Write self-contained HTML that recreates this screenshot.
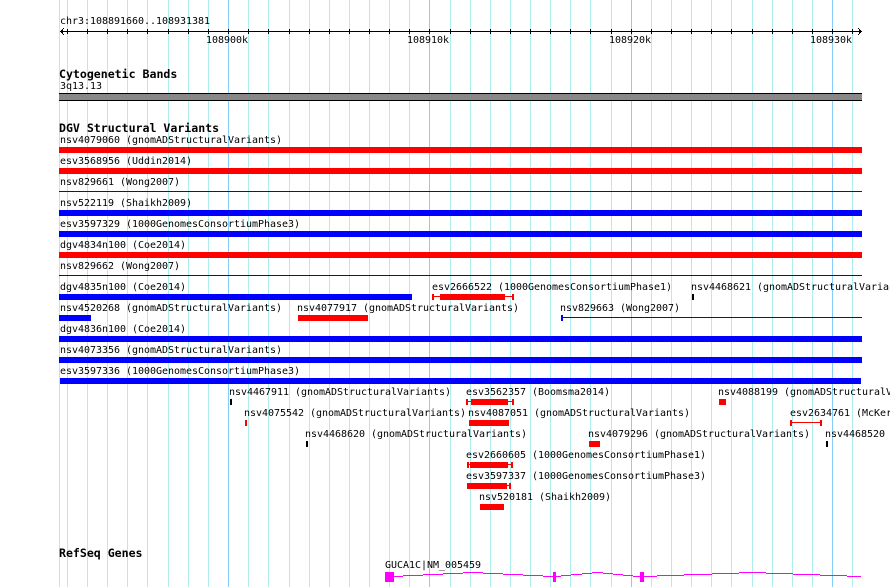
<!DOCTYPE html>
<html>
<head>
<meta charset="utf-8">
<title>Genome browser</title>
<style>
html,body{margin:0;padding:0;background:#fff;width:890px;height:587px;overflow:hidden}
svg{display:block}
text{font-family:"DejaVu Sans Mono","Liberation Mono",monospace;font-size:10px;letter-spacing:-0.02px;fill:#000}
text.b{font-size:11.6px;font-weight:bold}
.g{fill:#aeeeee}
.d{fill:#87cefa}
.r{fill:#f00}
.u{fill:#00f}
.k{fill:#000}
.m{fill:#f0f}
</style>
</head>
<body>
<svg width="890" height="587" viewBox="0 0 890 587" shape-rendering="crispEdges">
<!-- grid -->
<g class="g">
<rect x="59" y="0" width="1" height="587"/><rect x="67" y="0" width="1" height="587"/><rect x="87" y="0" width="1" height="587"/><rect x="107" y="0" width="1" height="587"/><rect x="127" y="0" width="1" height="587"/><rect x="147" y="0" width="1" height="587"/><rect x="168" y="0" width="1" height="587"/><rect x="188" y="0" width="1" height="587"/><rect x="208" y="0" width="1" height="587"/>
<rect x="248" y="0" width="1" height="587"/><rect x="268" y="0" width="1" height="587"/><rect x="289" y="0" width="1" height="587"/><rect x="309" y="0" width="1" height="587"/><rect x="329" y="0" width="1" height="587"/><rect x="349" y="0" width="1" height="587"/><rect x="369" y="0" width="1" height="587"/><rect x="389" y="0" width="1" height="587"/><rect x="409" y="0" width="1" height="587"/>
<rect x="450" y="0" width="1" height="587"/><rect x="470" y="0" width="1" height="587"/><rect x="490" y="0" width="1" height="587"/><rect x="510" y="0" width="1" height="587"/><rect x="530" y="0" width="1" height="587"/><rect x="550" y="0" width="1" height="587"/><rect x="570" y="0" width="1" height="587"/><rect x="590" y="0" width="1" height="587"/><rect x="611" y="0" width="1" height="587"/>
<rect x="651" y="0" width="1" height="587"/><rect x="671" y="0" width="1" height="587"/><rect x="691" y="0" width="1" height="587"/><rect x="711" y="0" width="1" height="587"/><rect x="731" y="0" width="1" height="587"/><rect x="752" y="0" width="1" height="587"/><rect x="772" y="0" width="1" height="587"/><rect x="792" y="0" width="1" height="587"/><rect x="812" y="0" width="1" height="587"/><rect x="852" y="0" width="1" height="587"/>
</g>
<g class="d">
<rect x="228" y="0" width="1" height="587"/><rect x="429" y="0" width="1" height="587"/><rect x="631" y="0" width="1" height="587"/><rect x="832" y="0" width="1" height="587"/>
</g>

<!-- ruler -->
<text x="60" y="24">chr3:108891660..108931381</text>
<g class="k">
<rect x="60" y="31" width="802" height="1"/>
<rect x="61" y="30" width="1" height="3"/><rect x="62" y="29" width="1" height="5"/><rect x="63" y="28" width="1" height="1"/><rect x="63" y="34" width="1" height="1"/>
<rect x="860" y="30" width="1" height="3"/><rect x="859" y="29" width="1" height="5"/><rect x="858" y="28" width="1" height="1"/><rect x="858" y="34" width="1" height="1"/>
<rect x="67" y="29" width="1" height="5"/><rect x="87" y="29" width="1" height="5"/><rect x="107" y="29" width="1" height="5"/><rect x="127" y="29" width="1" height="5"/><rect x="147" y="29" width="1" height="5"/><rect x="168" y="29" width="1" height="5"/><rect x="188" y="29" width="1" height="5"/><rect x="208" y="29" width="1" height="5"/><rect x="228" y="29" width="1" height="5"/><rect x="248" y="29" width="1" height="5"/><rect x="268" y="29" width="1" height="5"/><rect x="289" y="29" width="1" height="5"/><rect x="309" y="29" width="1" height="5"/><rect x="329" y="29" width="1" height="5"/><rect x="349" y="29" width="1" height="5"/><rect x="369" y="29" width="1" height="5"/><rect x="389" y="29" width="1" height="5"/><rect x="409" y="29" width="1" height="5"/><rect x="429" y="29" width="1" height="5"/><rect x="450" y="29" width="1" height="5"/><rect x="470" y="29" width="1" height="5"/><rect x="490" y="29" width="1" height="5"/><rect x="510" y="29" width="1" height="5"/><rect x="530" y="29" width="1" height="5"/><rect x="550" y="29" width="1" height="5"/><rect x="570" y="29" width="1" height="5"/><rect x="590" y="29" width="1" height="5"/><rect x="611" y="29" width="1" height="5"/><rect x="631" y="29" width="1" height="5"/><rect x="651" y="29" width="1" height="5"/><rect x="671" y="29" width="1" height="5"/><rect x="691" y="29" width="1" height="5"/><rect x="711" y="29" width="1" height="5"/><rect x="731" y="29" width="1" height="5"/><rect x="752" y="29" width="1" height="5"/><rect x="772" y="29" width="1" height="5"/><rect x="792" y="29" width="1" height="5"/><rect x="812" y="29" width="1" height="5"/><rect x="832" y="29" width="1" height="5"/><rect x="852" y="29" width="1" height="5"/>
</g>
<text x="206" y="43">108900k</text>
<text x="407" y="43">108910k</text>
<text x="609" y="43">108920k</text>
<text x="810" y="43">108930k</text>

<!-- cytogenetic -->
<text class="b" x="59" y="78">Cytogenetic Bands</text>
<text x="60" y="89">3q13.13</text>
<rect class="k" x="59" y="93" width="803" height="8"/>
<rect x="59" y="94" width="803" height="6" fill="#888888"/>

<!-- DGV -->
<text class="b" x="59" y="132">DGV Structural Variants</text>
<text x="60" y="143">nsv4079060 (gnomADStructuralVariants)</text>
<rect class="r" x="59" y="147" width="803" height="6"/>
<text x="60" y="164">esv3568956 (Uddin2014)</text>
<rect class="r" x="59" y="168" width="803" height="6"/>
<text x="60" y="185">nsv829661 (Wong2007)</text>
<rect class="u" x="59" y="191" width="803" height="1"/>
<text x="60" y="206">nsv522119 (Shaikh2009)</text>
<rect class="u" x="59" y="210" width="803" height="6"/>
<text x="60" y="227">esv3597329 (1000GenomesConsortiumPhase3)</text>
<rect class="u" x="59" y="231" width="803" height="6"/>
<text x="60" y="248">dgv4834n100 (Coe2014)</text>
<rect class="r" x="59" y="252" width="803" height="6"/>
<text x="60" y="269">nsv829662 (Wong2007)</text>
<rect class="u" x="59" y="275" width="803" height="1"/>

<text x="60" y="290">dgv4835n100 (Coe2014)</text>
<rect class="u" x="59" y="294" width="353" height="6"/>
<text x="432" y="290">esv2666522 (1000GenomesConsortiumPhase1)</text>
<rect class="r" x="432" y="294" width="2" height="6"/>
<rect class="r" x="434" y="296" width="78" height="1"/>
<rect class="r" x="440" y="294" width="65" height="6"/>
<rect class="r" x="512" y="294" width="2" height="6"/>
<text x="691" y="290">nsv4468621 (gnomADStructuralVariants)</text>
<rect class="k" x="692" y="294" width="2" height="6"/>

<text x="60" y="311">nsv4520268 (gnomADStructuralVariants)</text>
<rect class="u" x="59" y="315" width="32" height="6"/>
<text x="297" y="311">nsv4077917 (gnomADStructuralVariants)</text>
<rect class="r" x="298" y="315" width="70" height="6"/>
<text x="560" y="311">nsv829663 (Wong2007)</text>
<rect class="u" x="561" y="315" width="2" height="6"/>
<rect class="u" x="563" y="317" width="299" height="1"/>

<text x="60" y="332">dgv4836n100 (Coe2014)</text>
<rect class="u" x="59" y="336" width="803" height="6"/>
<text x="60" y="353">nsv4073356 (gnomADStructuralVariants)</text>
<rect class="u" x="59" y="357" width="803" height="6"/>
<text x="60" y="374">esv3597336 (1000GenomesConsortiumPhase3)</text>
<rect class="u" x="60" y="378" width="801" height="6"/>

<text x="229" y="395">nsv4467911 (gnomADStructuralVariants)</text>
<rect class="k" x="230" y="399" width="2" height="6"/>
<text x="466" y="395">esv3562357 (Boomsma2014)</text>
<rect class="r" x="466" y="399" width="2" height="6"/>
<rect class="r" x="468" y="401" width="44" height="1"/>
<rect class="r" x="471" y="399" width="37" height="6"/>
<rect class="r" x="512" y="399" width="2" height="6"/>
<text x="718" y="395">nsv4088199 (gnomADStructuralVariants)</text>
<rect class="r" x="719" y="399" width="7" height="6"/>

<text x="244" y="416">nsv4075542 (gnomADStructuralVariants)</text>
<rect class="r" x="245" y="420" width="2" height="6"/>
<text x="468" y="416">nsv4087051 (gnomADStructuralVariants)</text>
<rect class="r" x="469" y="420" width="40" height="6"/>
<text x="790" y="416">esv2634761 (McKernan2010)</text>
<rect class="r" x="790" y="420" width="2" height="6"/>
<rect class="r" x="792" y="422" width="28" height="1"/>
<rect class="r" x="820" y="420" width="2" height="6"/>

<text x="305" y="437">nsv4468620 (gnomADStructuralVariants)</text>
<rect class="k" x="306" y="441" width="2" height="6"/>
<text x="588" y="437">nsv4079296 (gnomADStructuralVariants)</text>
<rect class="r" x="589" y="441" width="11" height="6"/>
<text x="825" y="437">nsv4468520</text>
<rect class="k" x="826" y="441" width="2" height="6"/>

<text x="466" y="458">esv2660605 (1000GenomesConsortiumPhase1)</text>
<rect class="r" x="467" y="462" width="2" height="6"/>
<rect class="r" x="469" y="464" width="2" height="1"/>
<rect class="r" x="470" y="462" width="38" height="6"/>
<rect class="r" x="508" y="464" width="3" height="1"/>
<rect class="r" x="511" y="462" width="2" height="6"/>
<text x="466" y="479">esv3597337 (1000GenomesConsortiumPhase3)</text>
<rect class="r" x="467" y="483" width="40" height="6"/>
<rect class="r" x="507" y="485" width="2" height="1"/>
<rect class="r" x="509" y="483" width="2" height="6"/>
<text x="479" y="500">nsv520181 (Shaikh2009)</text>
<rect class="r" x="480" y="504" width="24" height="6"/>

<!-- RefSeq -->
<text class="b" x="59" y="557">RefSeq Genes</text>
<text x="385" y="568">GUCA1C|NM_005459</text>
<g class="m">
<rect x="385" y="572" width="9" height="10"/>
<rect x="553" y="572" width="3" height="10"/>
<rect x="640" y="572" width="4" height="10"/>
<rect x="394" y="576" width="9" height="1"/>
<rect x="403" y="575" width="20" height="1"/>
<rect x="423" y="574" width="20" height="1"/>
<rect x="443" y="573" width="20" height="1"/>
<rect x="463" y="572" width="20" height="1"/>
<rect x="483" y="573" width="20" height="1"/>
<rect x="503" y="574" width="20" height="1"/>
<rect x="523" y="575" width="20" height="1"/>
<rect x="543" y="576" width="10" height="1"/>
<rect x="556" y="576" width="5" height="1"/>
<rect x="561" y="575" width="10" height="1"/>
<rect x="571" y="574" width="11" height="1"/>
<rect x="582" y="573" width="10" height="1"/>
<rect x="592" y="572" width="11" height="1"/>
<rect x="603" y="573" width="10" height="1"/>
<rect x="613" y="574" width="10" height="1"/>
<rect x="623" y="575" width="10" height="1"/>
<rect x="633" y="576" width="7" height="1"/>
<rect x="644" y="576" width="13" height="1"/>
<rect x="657" y="575" width="27" height="1"/>
<rect x="684" y="574" width="28" height="1"/>
<rect x="712" y="573" width="27" height="1"/>
<rect x="739" y="572" width="27" height="1"/>
<rect x="766" y="573" width="27" height="1"/>
<rect x="793" y="574" width="27" height="1"/>
<rect x="820" y="575" width="27" height="1"/>
<rect x="847" y="576" width="14" height="1"/>
</g>
</svg>
</body>
</html>
